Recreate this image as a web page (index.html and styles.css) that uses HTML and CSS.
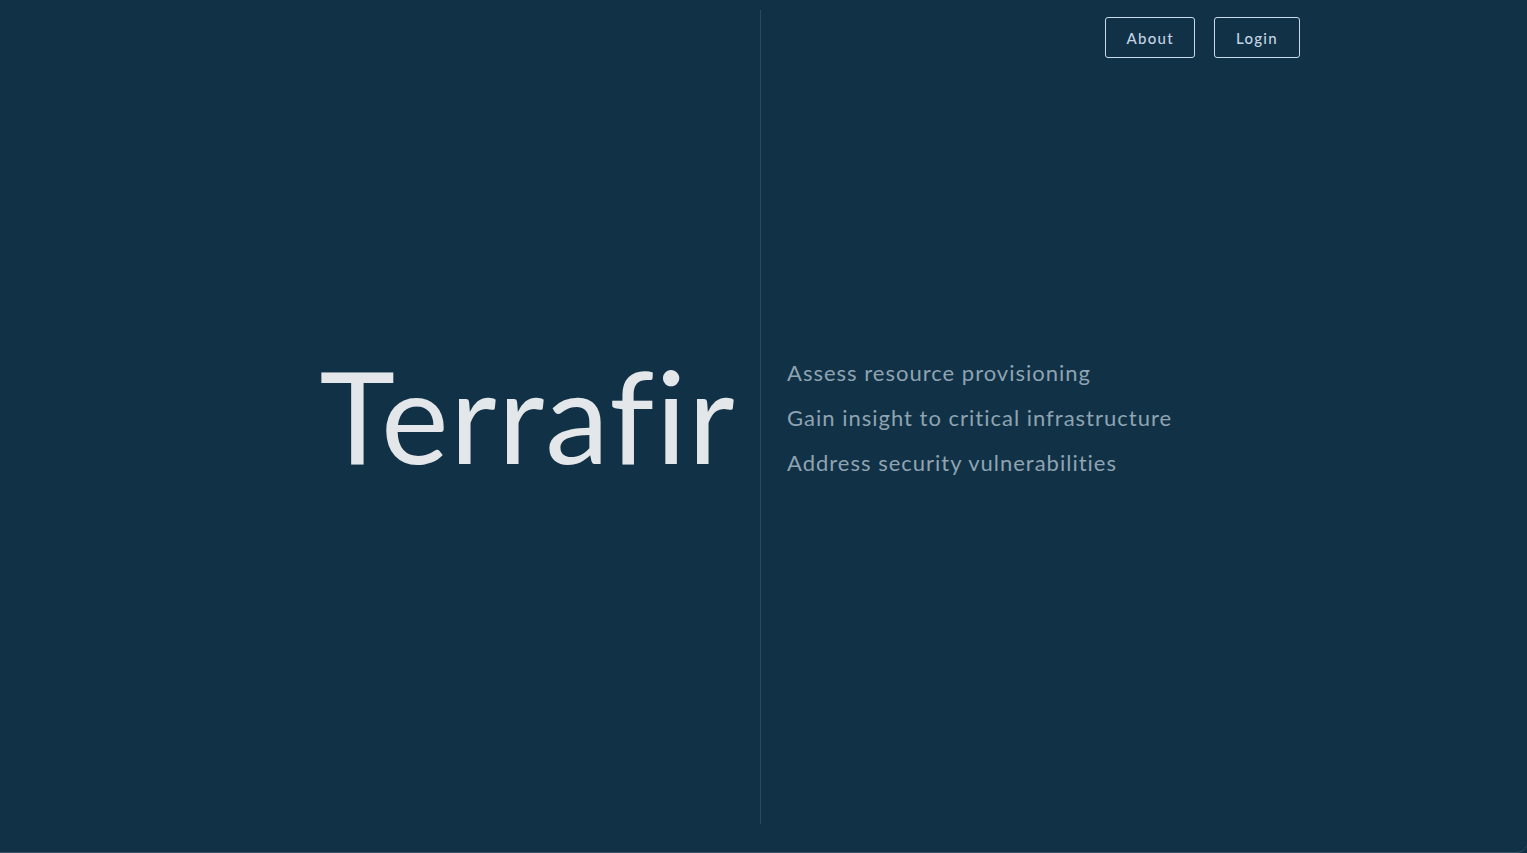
FILE: index.html
```html
<!DOCTYPE html>
<html lang="en">
<head>
<meta charset="utf-8">
<title>Terrafir</title>
<link rel="stylesheet" href="styles.css">
</head>
<body>
<div class="page">
  <nav class="nav">
    <a class="btn" href="#">About</a>
    <a class="btn" href="#">Login</a>
  </nav>
  <main class="split">
    <section class="brand">
      <h1 class="title">Terrafir</h1>
    </section>
    <section class="points">
      <p class="point">Assess resource provisioning</p>
      <p class="point">Gain insight to critical infrastructure</p>
      <p class="point">Address security vulnerabilities</p>
    </section>
  </main>
</div>
</body>
</html>
```
FILE: styles.css
```css
html, body {
  margin: 0;
  padding: 0;
  height: 100%;
}
body {
  background: #113246;
  font-family: Lato, "Noto Sans", sans-serif;
  overflow: hidden;
}
.page {
  position: relative;
  height: 853px;
  box-sizing: border-box;
  padding: 10px 0 28px 0;
  border-bottom: 1px solid #3a5466;
  border-bottom-right-radius: 10px;
}
.nav {
  position: absolute;
  top: 17px;
  right: 227px;
  display: flex;
  gap: 19px;
}
.btn {
  display: flex;
  align-items: center;
  justify-content: center;
  height: 41px;
  box-sizing: border-box;
  padding: 0 20px;
  border: 1px solid #c9d9ea;
  border-radius: 3px;
  color: #c2d3e4;
  text-decoration: none;
  font-size: 15px;
  letter-spacing: 1.3px;
  font-weight: 500;
}
.btn + .btn {
  padding: 0 21px;
}
.split {
  display: grid;
  grid-template-columns: 761px 1fr;
  height: 100%;
}
.brand {
  border-right: 1px solid #2a4a5e;
  display: flex;
  align-items: center;
  justify-content: flex-end;
  padding-right: 24px;
}
.title {
  margin: 0;
  font-size: 128px;
  font-weight: 400;
  color: #e3e7ea;
  letter-spacing: 1.5px;
  line-height: 1;
  transform: translateY(-2px);
}
.points {
  display: flex;
  flex-direction: column;
  justify-content: center;
  padding-left: 26px;
  gap: 0;
}
.point {
  margin: 0;
  font-size: 22px;
  line-height: 45px;
  color: #8fa3b2;
  letter-spacing: 1px;
}
```
